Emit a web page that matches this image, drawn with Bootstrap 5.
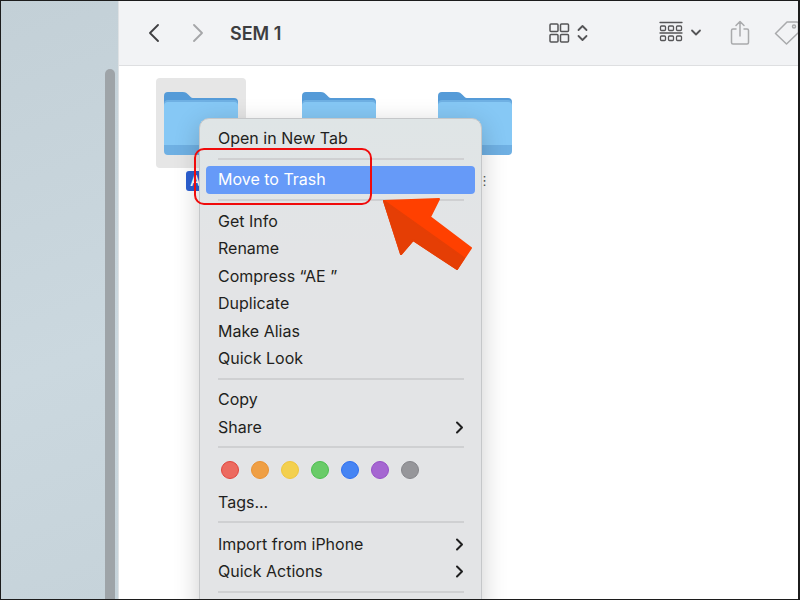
<!DOCTYPE html>
<html lang="en">
<head>
  <meta charset="UTF-8">
  <title>SEM 1</title>
  <link href="https://cdn.jsdelivr.net/npm/bootstrap@5.3.2/dist/css/bootstrap.min.css" rel="stylesheet">
  <style>
    html, body { margin: 0; height: 600px; overflow: hidden; background: #fff; }
    body { font-family: "Inter", "Liberation Sans", sans-serif; }
    .shot { width: 800px; height: 600px; border: solid #1c1c1c; border-width: 1px 2px 1px 1px; overflow: hidden; position: relative; }
    .side-pane { width: 118px; background: linear-gradient(160deg, #c3d0d7, #cbd8df 60%, #c6d3da); border-right: 1px solid #dfe2e4; position: relative; }
    .side-thumb { position: absolute; left: 104px; top: 68px; bottom: 0; width: 10px; border-radius: 6px 6px 0 0; background: #9ea4a8; }
    .tool-bar { height: 65px; background: #f2f3f5; border-bottom: 1px solid #dedfe1; padding-left: 28px; white-space: nowrap; }
    .back-next { margin-left: 30px; }
    .folder-title { font-size: 18px; font-weight: 600; color: #3d3d3f; margin-left: 25px; }
    .tool-gap-a { margin-left: 268px; }
    .tool-gap-b { margin-left: 70px; }
    .tool-gap-c { margin-left: 27px; }
    .tool-gap-d { margin-left: 24px; }
    .file-area { padding: 12px 0 0 37px; }
    .file-cell { width: 136px; }
    .file-cell-first { width: 138px; }
    .file-sel { width: 90px; height: 90px; background: #e6e6e6; border-radius: 4px; }
    .file-cell-plain { width: 90px; height: 90px; }
    .name-tag { position: absolute; left: 185px; top: 170px; width: 30px; height: 20px; background: #2b5fd1; border-radius: 3px; color: #fff; font-size: 15px; font-weight: 500; padding-left: 4px; line-height: 20px; }
    .name-dots { position: absolute; left: 477px; top: 172px; color: #555; font-family: "DejaVu Sans", sans-serif; font-size: 13px; line-height: 16px; }
    .ctx-menu { position: absolute; left: 198px; top: 117px; width: 283px; height: 500px; background: #e3e4e6; background-image: linear-gradient(180deg, #dfe5e6 0, #e3e4e6 130px); border: 1px solid #c5c7c9; border-radius: 10px; box-shadow: 0 6px 26px rgba(0,0,0,.2); padding: 6px 6px 0; font-size: 16px; color: #1f1f20; }
    .ctx-row { height: 27.5px; padding-left: 12px; padding-right: 11px; line-height: 27.5px; }
    .ctx-active { background: #669af8; color: #fff; border-radius: 4px; height: 28px; }
    .ctx-sep { height: 2px; background: #cfd0d2; margin: 5px 11px 6.5px 12px; }
    .ctx-sep-wide { margin-bottom: 7.5px; }
    .tag-dot { width: 18px; height: 18px; border-radius: 50%; border: 1.5px solid; }
    .tag-line { height: 30px; padding-left: 15px; gap: 12px; margin-bottom: 4px; }
    .red-box { position: absolute; left: 193px; top: 147px; width: 178px; height: 57px; border: 2px solid #f00b0b; border-radius: 10px; }
    .red-arrow { position: absolute; left: 379px; top: 194px; }
  </style>
</head>
<body>
<div class="shot d-flex">
  <div class="side-pane flex-shrink-0"><div class="side-thumb"></div></div>
  <div class="flex-grow-1">
    <div class="tool-bar d-flex align-items-center">
      <svg class="flex-shrink-0" width="14" height="18" viewBox="0 0 14 18" fill="none" stroke="#3f3f41" stroke-width="1.8" stroke-linecap="round" stroke-linejoin="round"><path d="M11 1 3 9l8 8"/></svg>
      <svg class="back-next flex-shrink-0" width="14" height="18" viewBox="0 0 14 18" fill="none" stroke="#a5a6a8" stroke-width="1.8" stroke-linecap="round" stroke-linejoin="round"><path d="M3 1l8 8-8 8"/></svg>
      <div class="folder-title">SEM 1</div>
      <svg class="tool-gap-a flex-shrink-0" width="40" height="22" viewBox="0 0 40 22" fill="none" stroke="#555557" stroke-width="1.5" stroke-linecap="round" stroke-linejoin="round">
        <rect x="1" y="2" width="8" height="7.5" rx="1"/><rect x="11.5" y="2" width="8" height="7.5" rx="1"/><rect x="1" y="12.5" width="8" height="7.5" rx="1"/><rect x="11.5" y="12.5" width="8" height="7.5" rx="1"/>
        <path d="M29.5 8l4-4 4 4M29.5 14l4 4 4-4" stroke-width="1.8"/>
      </svg>
      <svg class="tool-gap-b flex-shrink-0" width="44" height="24" viewBox="0 0 44 24" fill="none" stroke="#555557" stroke-width="1.3" stroke-linecap="round" stroke-linejoin="round">
        <path d="M1 1.5h22M1 12h22"/>
        <rect x="1.5" y="5" width="5" height="4.5" rx="1"/><rect x="9.5" y="5" width="5" height="4.5" rx="1"/><rect x="17.5" y="5" width="5" height="4.5" rx="1"/>
        <rect x="1.5" y="15" width="5" height="4.5" rx="1"/><rect x="9.5" y="15" width="5" height="4.5" rx="1"/><rect x="17.5" y="15" width="5" height="4.5" rx="1"/>
        <path d="M33 9.5l4 4 4-4" stroke-width="1.8"/>
      </svg>
      <svg class="tool-gap-c flex-shrink-0" width="20" height="26" viewBox="0 0 20 26" fill="none" stroke="#a9aaac" stroke-width="1.5" stroke-linecap="round" stroke-linejoin="round">
        <path d="M6 9H3a1.500 1.500 0 0 0-1.500 1.500v12A1.500 1.500 0 0 0 3 24h14a1.500 1.500 0 0 0 1.500-1.500v-12A1.500 1.500 0 0 0 17 9h-3M10 16V2M6 5.500 10 1.500l4 4"/>
      </svg>
      <svg class="tool-gap-d flex-shrink-0" width="26" height="26" viewBox="0 0 26 26" fill="none" stroke="#a9aaac" stroke-width="1.5" stroke-linejoin="round">
        <path d="M1.500 13.500 13 2h10a1.500 1.500 0 0 1 1.500 1.500v9L12.500 24z"/><circle cx="20" cy="6.500" r="1.500"/>
      </svg>
    </div>
    <div class="file-area d-flex">
      <div class="file-cell-first"><div class="file-sel d-flex align-items-center justify-content-center">
        <svg width="74" height="63" viewBox="0 0 75 63" preserveAspectRatio="none"><use href="#folder-ico"/></svg>
      </div></div>
      <div class="file-cell"><div class="file-cell-plain d-flex align-items-center justify-content-center">
        <svg width="74" height="63" viewBox="0 0 75 63" preserveAspectRatio="none"><use href="#folder-ico"/></svg>
      </div></div>
      <div class="file-cell"><div class="file-cell-plain d-flex align-items-center justify-content-center">
        <svg width="74" height="63" viewBox="0 0 75 63" preserveAspectRatio="none"><use href="#folder-ico"/></svg>
      </div></div>
    </div>
  </div>

  <svg width="0" height="0" class="position-absolute">
    <defs>
      <symbol id="folder-ico" viewBox="0 0 75 63">
        <path d="M0 4a4 4 0 0 1 4-4h15c3 0 4 1 6 3l1.500 1.500c1 1 2 1.500 4 1.500H71a4 4 0 0 1 4 4V30H0z" fill="#559bd8"/>
        <rect y="8" width="75" height="55" rx="4" fill="#6fb0e3"/>
        <path d="M0 14a4 4 0 0 1 4-4h67a4 4 0 0 1 4 4v39H0z" fill="#86c8f5"/>
      </symbol>
    </defs>
  </svg>

  <div class="name-tag">A</div>
  <div class="name-dots">⋮</div>

  <div class="ctx-menu">
    <div class="ctx-row">Open in New Tab</div>
    <div class="ctx-sep"></div>
    <div class="ctx-row ctx-active">Move to Trash</div>
    <div class="ctx-sep"></div>
    <div class="ctx-row">Get Info</div>
    <div class="ctx-row">Rename</div>
    <div class="ctx-row">Compress “AE ”</div>
    <div class="ctx-row">Duplicate</div>
    <div class="ctx-row">Make Alias</div>
    <div class="ctx-row">Quick Look</div>
    <div class="ctx-sep"></div>
    <div class="ctx-row">Copy</div>
    <div class="ctx-row d-flex justify-content-between align-items-center">Share <svg width="9" height="13" viewBox="0 0 9 13" fill="none" stroke="#1f1f20" stroke-width="2" stroke-linecap="round" stroke-linejoin="round"><path d="M2 1.500l5 5-5 5"/></svg></div>
    <div class="ctx-sep"></div>
    <div class="tag-line d-flex align-items-center">
      <span class="tag-dot" style="background:#ec6a60;border-color:#e2443c"></span>
      <span class="tag-dot" style="background:#ef9f45;border-color:#ea9232"></span>
      <span class="tag-dot" style="background:#f3d04f;border-color:#f0c53c"></span>
      <span class="tag-dot" style="background:#69cb68;border-color:#4cbe4f"></span>
      <span class="tag-dot" style="background:#4684f3;border-color:#2f6ff0"></span>
      <span class="tag-dot" style="background:#a566d1;border-color:#9650c7"></span>
      <span class="tag-dot" style="background:#96969a;border-color:#85858a"></span>
    </div>
    <div class="ctx-row">Tags...</div>
    <div class="ctx-sep ctx-sep-wide"></div>
    <div class="ctx-row d-flex justify-content-between align-items-center">Import from iPhone <svg width="9" height="13" viewBox="0 0 9 13" fill="none" stroke="#1f1f20" stroke-width="2" stroke-linecap="round" stroke-linejoin="round"><path d="M2 1.500l5 5-5 5"/></svg></div>
    <div class="ctx-row d-flex justify-content-between align-items-center">Quick Actions <svg width="9" height="13" viewBox="0 0 9 13" fill="none" stroke="#1f1f20" stroke-width="2" stroke-linecap="round" stroke-linejoin="round"><path d="M2 1.500l5 5-5 5"/></svg></div>
    <div class="ctx-sep"></div>
  </div>

  <div class="red-box"></div>
  <svg class="red-arrow" width="96" height="80" viewBox="0 0 96 80">
    <path d="M4 6 59 4 50 22 91 53 77 74 33 45 21 59z" fill="#ff4000" stroke="#ff4000" stroke-width="2" stroke-linejoin="round"/>
    <path d="M4 6 84 63 77 74 33 45 21 59z" fill="#e53e05" stroke="#e53e05" stroke-width="2" stroke-linejoin="round"/>
  </svg>
</div>
</body>
</html>
